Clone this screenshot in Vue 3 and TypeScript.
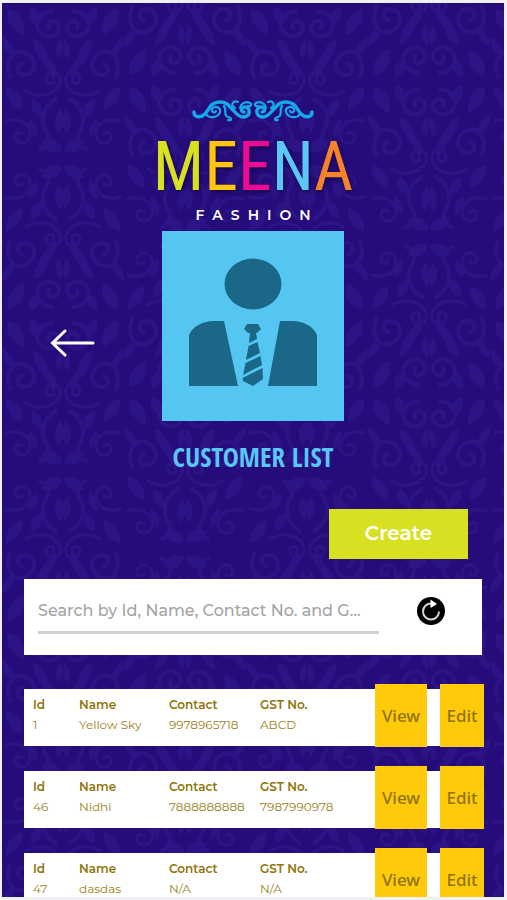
<script setup lang="ts">
import { ref } from 'vue'

interface Customer {
  id: string
  name: string
  contact: string
  gst: string
}

const query = ref<string>('')

const brand: { letter: string; tone: string }[] = [
  { letter: 'M', tone: 'lime' },
  { letter: 'E', tone: 'amber' },
  { letter: 'E', tone: 'pink' },
  { letter: 'N', tone: 'sky' },
  { letter: 'A', tone: 'orange' },
]

const tagline: string[] = ['F', 'A', 'S', 'H', 'I', 'O', 'N']

const customers: Customer[] = [
  { id: '1', name: 'Yellow Sky', contact: '9978965718', gst: 'ABCD' },
  { id: '46', name: 'Nidhi', contact: '7888888888', gst: '7987990978' },
  { id: '47', name: 'dasdas', contact: 'N/A', gst: 'N/A' },
]
</script>

<template>
  <div class="frame">
    <main class="screen">
      <svg class="damask" aria-hidden="true">
        <defs>
          <g id="motif" fill="none" stroke="#2c1487" stroke-linecap="round">
            <path stroke-width="4" d="M8 74C2 56 12 44 24 50s10 22-2 22c-8 0-8-10-2-11" />
            <path stroke-width="4" d="M50 8c-14 2-20 16-10 23s22-3 15-11c-5-5-11 0-8 5" />
            <path stroke-width="3" d="M24 88c12 8 30 4 34-8 3-12-12-15-14-5-1 6 6 7 8 3" />
            <path stroke-width="3" d="M4 118c12-4 24 2 24 13s-14 12-15 3c0-5 5-6 7-3" />
            <path stroke-width="4" d="M54 96c-14 8-16 22-10 32 5 9 2 15-6 18" />
            <g fill="#2c1487" stroke="none">
              <path d="M6 6c12 2 18 12 15 26C10 27 3 18 6 6z" />
              <path d="M28 4c8 2 12 10 8 18-8-3-11-10-8-18z" />
              <path d="M31 36c14 4 12 16 20 24 5 6 4 14-1 18 1-12-16-18-19-42z" />
              <path d="M0 34c9 4 13 12 13 20C5 51 0 44 0 34z" />
              <path d="M4 84c11 2 17 10 16 23C9 104 3 95 4 84z" />
              <path d="M30 96c8 2 12 9 9 18-8-3-12-10-9-18z" />
              <path d="M40 138c10-4 18 0 20 10-10 4-17 0-20-10z" />
              <path d="M59 36c-6 6-7 14-2 20 4-6 5-13 2-20z" />
              <path d="M59 106c-7 7-8 16-2 24 5-7 6-16 2-24z" />
              <path d="M27 116c8 4 10 10 7 18-7-4-9-11-7-18z" />
            </g>
          </g>
          <g id="pair">
            <use href="#motif" />
            <use href="#motif" transform="translate(122 0) scale(-1 1)" />
          </g>
          <pattern id="cloth" width="244" height="312" patternUnits="userSpaceOnUse">
            <use href="#pair" />
            <use href="#pair" transform="translate(0 312) scale(1 -1)" />
            <use href="#pair" transform="translate(122 78)" />
            <use href="#pair" transform="translate(122 78) scale(1 -1)" />
            <use href="#pair" transform="translate(122 390) scale(1 -1)" />
          </pattern>
        </defs>
        <rect width="100%" height="100%" fill="url(#cloth)" />
      </svg>

      <header class="hero">
        <button class="back" type="button" aria-label="Back">
          <svg width="46" height="30" viewBox="0 0 46 30" aria-hidden="true">
            <path d="M43 15H3M15 3L2.500 15L15 27" />
          </svg>
        </button>

        <div class="identity">
          <div class="logo">
            <svg class="flourish" width="122" height="26" viewBox="0 0 122 26" aria-hidden="true">
              <defs>
                <g id="scroll">
                  <path stroke-width="3.400" d="M2 14C2 20 9 20 13 16C18 10 19 4 28 4C35 4 37 8 42 13C46 18 50 21 55 18C59 15 57 9 53 9C49 9 48 14 52 14" />
                  <path stroke-width="2.200" d="M14 16C17 21 26 20 28 14C29 9 22 7 20 11C19 14 23 16 24 13" />
                  <path stroke-width="2.200" d="M32 8C35 12 31 18 36 19C40 20 40 23 36 22" />
                  <path stroke-width="2.200" d="M43 10C38 7 41 2 46 4M48 10C49 5 54 3 58 5C60 6 59 9 56 8" />
                </g>
              </defs>
              <use href="#scroll" />
              <use href="#scroll" transform="translate(122 0) scale(-1 1)" />
            </svg>
            <div class="brand" role="img" aria-label="Meena">
              <span v-for="(b, i) in brand" :key="i" :class="b.tone">{{ b.letter }}</span>
            </div>
            <div class="tagline" role="img" aria-label="Fashion">
              <span v-for="t in tagline" :key="t">{{ t }}</span>
            </div>
          </div>

          <svg class="portrait" viewBox="0 0 182 190" aria-hidden="true">
            <rect width="182" height="190" fill="#55c6f2" />
            <g fill="#1a6787">
              <ellipse cx="91" cy="53" rx="28.500" ry="25.500" />
              <path d="M27 155V104C31 95 41 90 52 90H62L76 155Z" />
              <path d="M155 155V104C151 95 141 90 130 90H118L106 155Z" />
              <path d="M85 93H96L99 98L95 102H86L82 98Z" />
              <path d="M88 102H94L95 108L87 112Z" />
              <path d="M86.500 115L95.500 111L98 122L84 129Z" />
              <path d="M83.500 132L98.500 125L100 134L81 144Z" />
              <path d="M80.500 147L100.500 137L101 148L91 155L81 150Z" />
            </g>
          </svg>
          <h1>CUSTOMER LIST</h1>
        </div>
      </header>

      <div class="actions">
        <button class="create" type="button">Create</button>
      </div>

      <form class="search" role="search" @submit.prevent>
        <input
          v-model="query"
          type="text"
          aria-label="Search customers"
          placeholder="Search by Id, Name, Contact No. and G..."
        />
        <button class="refresh" type="button" aria-label="Refresh" @click="query = ''">
          <svg width="28" height="28" viewBox="0 0 28 28" aria-hidden="true">
            <circle cx="14" cy="14" r="14" fill="#000" />
            <path d="M22 14.500A8 8 0 1 1 14.500 6.500" fill="none" stroke="#d4d4d4" stroke-width="2" />
            <path d="M13.500 2.500L20 7L13.500 11Z" fill="#fff" />
          </svg>
        </button>
      </form>

      <ul class="records">
        <li v-for="c in customers" :key="c.id" class="record">
          <dl>
            <div><dt>Id</dt><dd>{{ c.id }}</dd></div>
            <div><dt>Name</dt><dd>{{ c.name }}</dd></div>
            <div><dt>Contact</dt><dd>{{ c.contact }}</dd></div>
            <div><dt>GST No.</dt><dd>{{ c.gst }}</dd></div>
          </dl>
          <button class="view" type="button">View</button>
          <button class="edit" type="button">Edit</button>
        </li>
      </ul>
    </main>
  </div>
</template>

<style>
body {
  background: #f1f1f5;
}
</style>

<style scoped>
.frame {
  box-sizing: border-box;
  height: 100vh;
  padding: 3px 3px 3px 2px;
  background: #f1f1f5;
  font-family: Montserrat, Inter, sans-serif;
}

.screen {
  position: relative;
  box-sizing: border-box;
  height: 100%;
  padding: 95px 20px 0 22px;
  overflow: hidden auto;
  scrollbar-width: none;
  background: #250c7a;
}

.damask {
  position: absolute;
  inset: 0;
  width: 100%;
  height: 100%;
}

.hero,
.actions,
.search,
.records {
  position: relative;
}

.hero,
.actions,
.search {
  margin-right: 2px;
}

button {
  padding: 0;
  border: 0;
  background: none;
  font-family: inherit;
  cursor: pointer;
}

.hero {
  display: grid;
  grid-template-columns: 1fr auto 1fr;
}

.back {
  justify-self: start;
  align-self: start;
  margin: 230px 0 0 26px;
}

.back svg {
  display: block;
  fill: none;
  stroke: #fff;
  stroke-width: 3;
  stroke-linecap: round;
}

.identity {
  display: flex;
  flex-direction: column;
  align-items: center;
  width: 192px;
}

.logo {
  display: flex;
  flex-direction: column;
  align-items: center;
  height: 133px;
}

.flourish {
  fill: none;
  stroke: #15a9ec;
  stroke-linecap: round;
}

.brand {
  display: flex;
  justify-content: center;
  margin-top: 8px;
  font-family: "Roboto Condensed", "Open Sans Condensed", sans-serif;
  font-size: 68px;
  font-weight: 400;
  line-height: 70px;
  filter: drop-shadow(1px 2px 2px #12054a);
}

.lime { color: #d9e021; }
.amber { color: #fdc60b; }
.pink { color: #ee0a93; }
.sky { color: #5cc7f5; }
.orange { color: #f6822a; }

.tagline {
  display: flex;
  gap: 8px;
  margin-top: 5px;
  color: #fff;
  font-size: 14px;
  font-weight: 600;
  line-height: 16px;
}

.portrait {
  display: block;
  width: 182px;
}

h1 {
  margin: 12px 0 0;
  color: #5ac6f8;
  font-family: "Open Sans Condensed", "Roboto Condensed", sans-serif;
  font-size: 27px;
  font-weight: 700;
  line-height: 48px;
  white-space: nowrap;
}

.actions {
  display: flex;
  justify-content: flex-end;
  padding: 28px 14px 20px 0;
}

.create {
  width: 139px;
  height: 50px;
  padding-bottom: 2px;
  background: #d7e121;
  color: #fff;
  font-size: 20px;
  font-weight: 600;
}

.search {
  display: flex;
  align-items: flex-start;
  height: 76px;
  background: #fff;
}

.search input {
  box-sizing: border-box;
  flex: 1;
  min-width: 0;
  height: 39px;
  margin: 16px 0 0 14px;
  padding: 0 0 6px;
  border: 0;
  border-bottom: 3px solid #d0d0d0;
  border-radius: 0;
  outline: 0;
  background: none;
  color: #555;
  font-family: inherit;
  font-size: 16px;
  font-weight: 500;
  text-overflow: ellipsis;
}

.search input::placeholder {
  color: #a4a4a4;
  opacity: 1;
}

.refresh {
  margin: 18px 37px 0 38px;
}

.refresh svg {
  display: block;
}

.records {
  display: grid;
  gap: 25px;
  margin: 34px 0 0;
  padding: 0;
  list-style: none;
}

.record {
  display: flex;
  height: 57px;
  background: #fff;
}

dl {
  display: grid;
  grid-template-columns: 46px 90px 91px 1fr;
  flex: 1;
  margin: 0;
  padding: 6px 0 0 9px;
  font-size: 12px;
  line-height: 20px;
}

dt {
  color: #8f7408;
  font-weight: 600;
}

dd {
  margin: 0;
  color: #9a8120;
}

.view,
.edit {
  height: 63px;
  margin-top: -5px;
  background: #ffca0a;
  color: #8f7408;
  font-family: "Noto Sans", "Open Sans", sans-serif;
  font-size: 17px;
  font-weight: 500;
}

.view {
  width: 52px;
}

.edit {
  width: 44px;
  margin-left: 13px;
}
</style>
